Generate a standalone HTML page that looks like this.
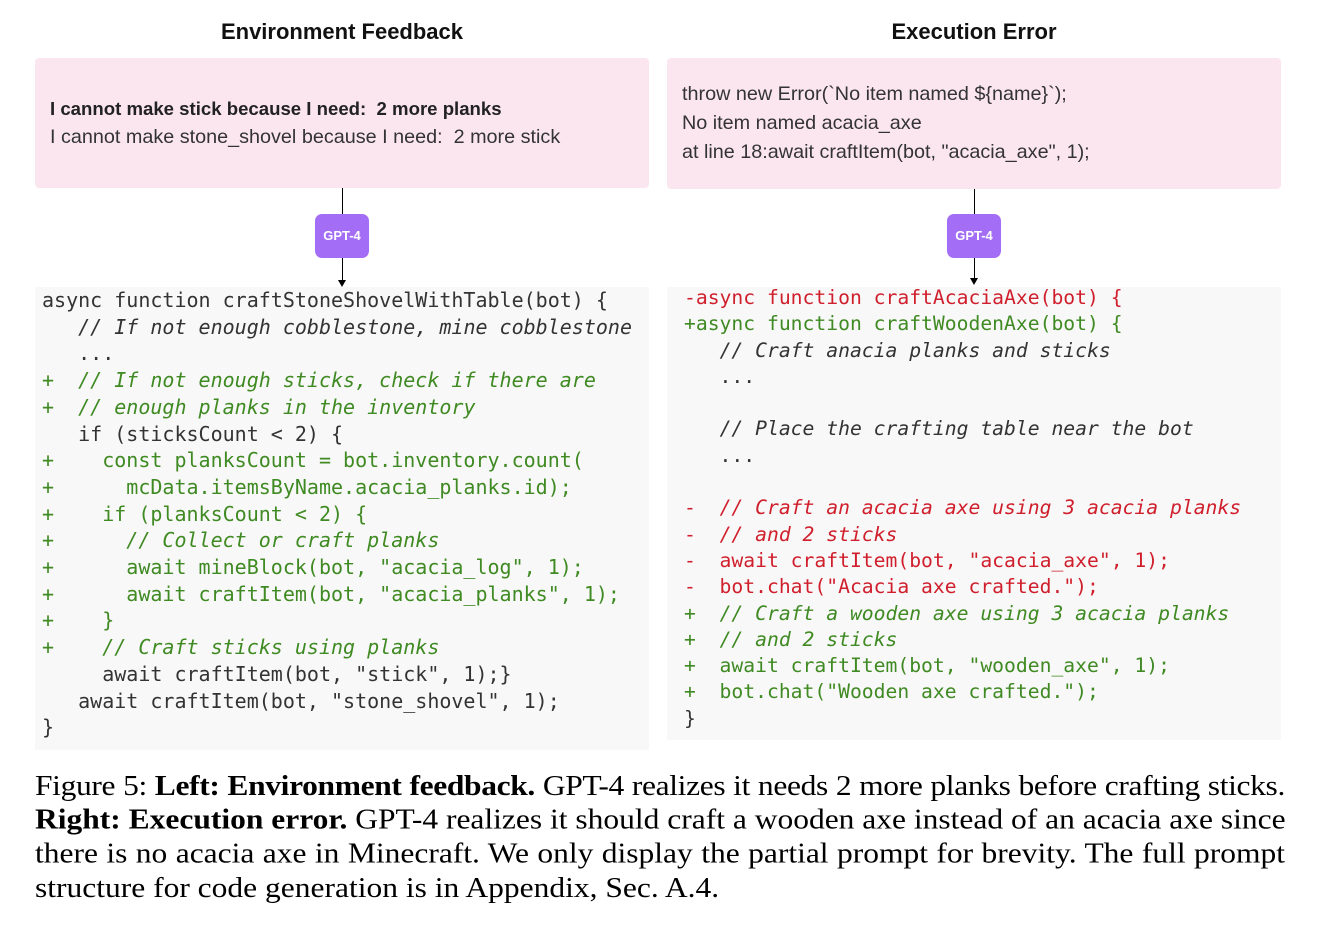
<!DOCTYPE html>
<html><head><meta charset="utf-8"><style>
*{margin:0;padding:0;box-sizing:border-box}
body{width:1323px;height:934px;background:#fff;position:relative;overflow:hidden;font-family:"Liberation Sans",sans-serif}
.h{position:absolute;top:19px;font-weight:bold;font-size:22px;color:#111;text-align:center;width:614px}
.pink{position:absolute;background:#fbe6ef;border-radius:4px}
.pt{position:absolute;font-size:19.8px;color:#333;white-space:pre}
.line{position:absolute;width:1px;background:#000}
.arrow{position:absolute;width:0;height:0;border-left:4px solid transparent;border-right:4px solid transparent;border-top:7px solid #000}
.gpt{position:absolute;width:54px;height:44px;background:#a36ef5;border-radius:7px;color:#fff;font-size:13px;font-weight:bold;text-align:center;line-height:44px}
.code{position:absolute;background:#f8f8f8}
.c{position:absolute;font-family:"DejaVu Sans Mono","Liberation Mono",monospace;white-space:pre;color:#333}
.g{color:#3f8a22}.r{color:#d01f2c}.i{font-style:italic}
.cap{position:absolute;left:35px;width:1250px;font-family:"Liberation Serif",serif;font-size:31.5px;color:#000;white-space:nowrap;transform:scaleY(0.89);transform-origin:0 0}
.cap div{height:38.2px;line-height:38.2px;text-align:justify;text-align-last:justify}
.cap div.last{text-align-last:left}
</style></head><body>
<div class="h" style="left:35px">Environment Feedback</div>
<div class="h" style="left:667px">Execution Error</div>

<div class="pink" style="left:35px;top:58px;width:614px;height:130px"></div>
<div class="pt" style="left:50px;top:98px;font-weight:bold;color:#222;font-size:18.6px">I cannot make stick because I need:  2 more planks</div>
<div class="pt" style="left:50px;top:126px">I cannot make stone_shovel because I need:  2 more stick</div>

<div class="pink" style="left:667px;top:58px;width:614px;height:131px"></div>
<div class="pt" style="left:682px;top:83px">throw new Error(`No item named ${name}`);</div>
<div class="pt" style="left:682px;top:112px">No item named acacia_axe</div>
<div class="pt" style="left:682px;top:141px">at line 18:await craftItem(bot, "acacia_axe", 1);</div>

<div class="line" style="left:342px;top:188px;height:96px"></div>
<div class="arrow" style="left:338px;top:280px"></div>
<div class="gpt" style="left:315px;top:214px">GPT-4</div>
<div class="line" style="left:974px;top:189px;height:93px"></div>
<div class="arrow" style="left:970px;top:278px"></div>
<div class="gpt" style="left:947px;top:214px">GPT-4</div>

<div class="code" style="left:35px;top:287px;width:614px;height:463px"></div>
<div class="c" style="left:42px;top:287px;font-size:20px;line-height:26.7px">async function craftStoneShovelWithTable(bot) {
   <span class="i">// If not enough cobblestone, mine cobblestone</span>
   ...
<span class="g">+  <span class="i">// If not enough sticks, check if there are</span></span>
<span class="g">+  <span class="i">// enough planks in the inventory</span></span>
   if (sticksCount &lt; 2) {
<span class="g">+    const planksCount = bot.inventory.count(</span>
<span class="g">+      mcData.itemsByName.acacia_planks.id);</span>
<span class="g">+    if (planksCount &lt; 2) {</span>
<span class="g">+      <span class="i">// Collect or craft planks</span></span>
<span class="g">+      await mineBlock(bot, "acacia_log", 1);</span>
<span class="g">+      await craftItem(bot, "acacia_planks", 1);</span>
<span class="g">+    }</span>
<span class="g">+    <span class="i">// Craft sticks using planks</span></span>
     await craftItem(bot, "stick", 1);}
   await craftItem(bot, "stone_shovel", 1);
}</div>

<div class="code" style="left:667px;top:287px;width:614px;height:453px"></div>
<div class="c" style="left:684px;top:285px;font-size:19.7px;line-height:26.3px"><span class="r">-async function craftAcaciaAxe(bot) {</span>
<span class="g">+async function craftWoodenAxe(bot) {</span>
   <span class="i">// Craft anacia planks and sticks</span>
   ...

   <span class="i">// Place the crafting table near the bot</span>
   ...

<span class="r">-  <span class="i">// Craft an acacia axe using 3 acacia planks</span></span>
<span class="r">-  <span class="i">// and 2 sticks</span></span>
<span class="r">-  await craftItem(bot, "acacia_axe", 1);</span>
<span class="r">-  bot.chat("Acacia axe crafted.");</span>
<span class="g">+  <span class="i">// Craft a wooden axe using 3 acacia planks</span></span>
<span class="g">+  <span class="i">// and 2 sticks</span></span>
<span class="g">+  await craftItem(bot, "wooden_axe", 1);</span>
<span class="g">+  bot.chat("Wooden axe crafted.");</span>
}</div>

<div class="cap" style="top:769px">
<div style="letter-spacing:-0.35px;word-spacing:-1px">Figure 5: <b>Left: Environment feedback.</b> GPT-4 realizes it needs 2 more planks before crafting sticks.</div>
<div><b>Right: Execution error.</b> GPT-4 realizes it should craft a wooden axe instead of an acacia axe since</div>
<div>there is no acacia axe in Minecraft. We only display the partial prompt for brevity. The full prompt</div>
<div class="last">structure for code generation is in Appendix, Sec. A.4.</div>
</div>
</body></html>
